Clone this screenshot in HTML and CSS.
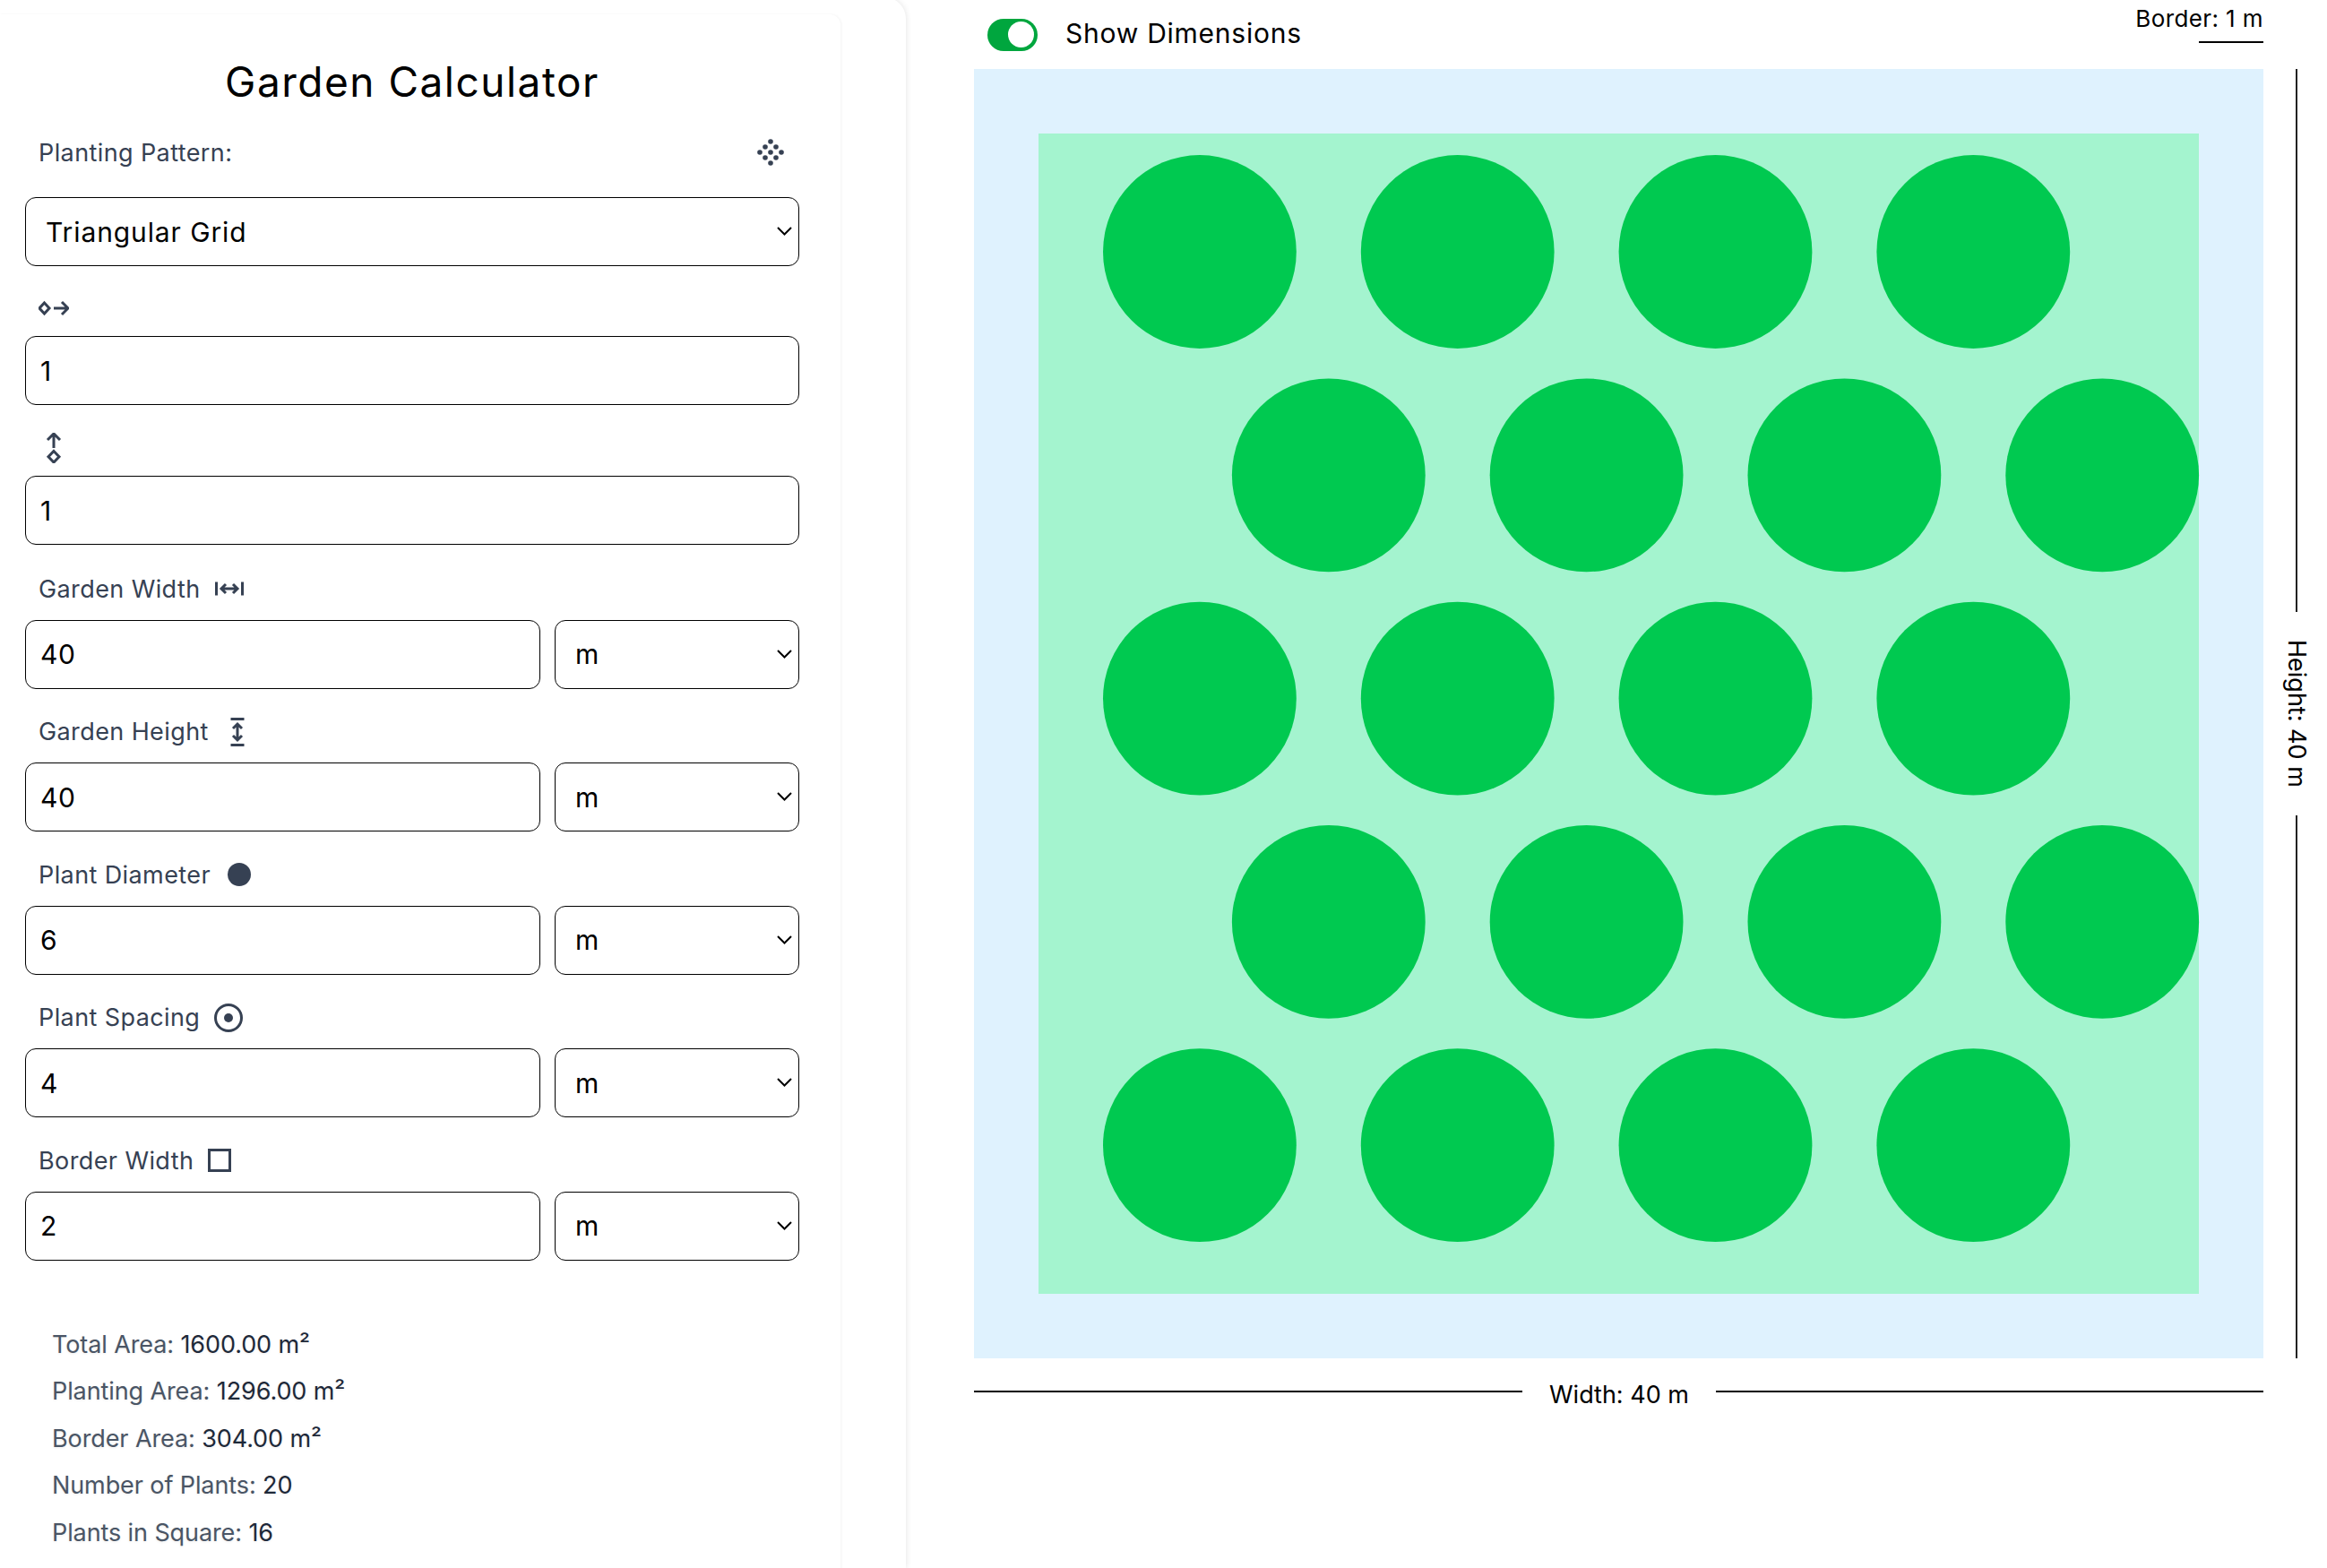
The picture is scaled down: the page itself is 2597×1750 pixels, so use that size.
FILE: index.html
```html
<!DOCTYPE html>
<html lang="en">
<head>
    <meta charset="UTF-8">
    <meta name="viewport" content="width=device-width, initial-scale=1.0">
    <title>Garden Calculator</title>
    <link rel="stylesheet" href="styles.css">
</head>
<body>
    <aside class="sidebar">
        <form class="card">
            <h1>Garden Calculator</h1>

            <div class="field field-pattern">
                <div class="label-row label-spread">
                    <label for="pattern">Planting Pattern:</label>
                    <svg class="icon" viewBox="0 0 30 30" width="30" height="30">
                        <g class="dots">
                            <circle cx="15" cy="3" r="2.8"/>
                            <circle cx="9" cy="9" r="2.8"/><circle cx="21" cy="9" r="2.8"/>
                            <circle cx="3" cy="15" r="2.8"/><circle cx="15" cy="15" r="2.8"/><circle cx="27" cy="15" r="2.8"/>
                            <circle cx="9" cy="21" r="2.8"/><circle cx="21" cy="21" r="2.8"/>
                            <circle cx="15" cy="27" r="2.8"/>
                        </g>
                    </svg>
                </div>
                <div class="select-wrap">
                    <select id="pattern" class="control select-wide">
                        <option>Triangular Grid</option>
                        <option>Square Grid</option>
                    </select>
                    <svg class="chevron" viewBox="0 0 17 10" width="17" height="10"><path d="M1 1l7.500 7.500L16 1"/></svg>
                </div>
            </div>

            <div class="field field-icon">
                <div class="label-row">
                    <svg class="icon" viewBox="0 0 34 34" width="34" height="34">
                        <g class="line">
                            <path d="M6.500 11L12 17l-5.500 6L1 17z"/>
                            <path d="M17 17h16M26 10l7 7-7 7"/>
                        </g>
                    </svg>
                </div>
                <input class="control" type="number" value="1">
            </div>

            <div class="field field-icon field-tall">
                <div class="label-row">
                    <svg class="icon" viewBox="0 0 34 34" width="34" height="34">
                        <g class="line">
                            <path d="M17 17V1M10 8l7-7 7 7"/>
                            <path d="M17 20.500l6 6.250-6 6.250-6-6.250z"/>
                        </g>
                    </svg>
                </div>
                <input class="control" type="number" value="1">
            </div>

            <div class="field">
                <div class="label-row">
                    <label for="gardenWidth">Garden Width</label>
                    <svg class="icon" viewBox="0 0 32 32" width="32" height="32">
                        <g class="line">
                            <path d="M1.500 8.500v15M30.500 8.500v15"/>
                            <path d="M7 16h18M12 11l-5 5 5 5M20 11l5 5-5 5"/>
                        </g>
                    </svg>
                </div>
                <div class="row">
                    <input id="gardenWidth" class="control" type="number" value="40">
                    <div class="select-wrap unit">
                        <select class="control"><option>m</option><option>ft</option></select>
                        <svg class="chevron" viewBox="0 0 17 10" width="17" height="10"><path d="M1 1l7.500 7.500L16 1"/></svg>
                    </div>
                </div>
            </div>

            <div class="field">
                <div class="label-row">
                    <label for="gardenHeight">Garden Height</label>
                    <svg class="icon" viewBox="0 0 32 32" width="32" height="32">
                        <g class="line">
                            <path d="M8.500 1.500h15M8.500 30.500h15"/>
                            <path d="M16 7v18M11 12l5-5 5 5M11 20l5 5 5-5"/>
                        </g>
                    </svg>
                </div>
                <div class="row">
                    <input id="gardenHeight" class="control" type="number" value="40">
                    <div class="select-wrap unit">
                        <select class="control"><option>m</option><option>ft</option></select>
                        <svg class="chevron" viewBox="0 0 17 10" width="17" height="10"><path d="M1 1l7.500 7.500L16 1"/></svg>
                    </div>
                </div>
            </div>

            <div class="field">
                <div class="label-row">
                    <label for="plantDiameter">Plant Diameter</label>
                    <svg class="icon" viewBox="0 0 32 32" width="32" height="32"><circle class="solid" cx="16" cy="16" r="13"/></svg>
                </div>
                <div class="row">
                    <input id="plantDiameter" class="control" type="number" value="6">
                    <div class="select-wrap unit">
                        <select class="control"><option>m</option><option>ft</option></select>
                        <svg class="chevron" viewBox="0 0 17 10" width="17" height="10"><path d="M1 1l7.500 7.500L16 1"/></svg>
                    </div>
                </div>
            </div>

            <div class="field">
                <div class="label-row">
                    <label for="plantSpacing">Plant Spacing</label>
                    <svg class="icon" viewBox="0 0 32 32" width="32" height="32">
                        <circle class="line" cx="16" cy="16" r="14.500"/>
                        <circle class="solid" cx="16" cy="16" r="5"/>
                    </svg>
                </div>
                <div class="row">
                    <input id="plantSpacing" class="control" type="number" value="4">
                    <div class="select-wrap unit">
                        <select class="control"><option>m</option><option>ft</option></select>
                        <svg class="chevron" viewBox="0 0 17 10" width="17" height="10"><path d="M1 1l7.500 7.500L16 1"/></svg>
                    </div>
                </div>
            </div>

            <div class="field">
                <div class="label-row label-tight">
                    <label for="borderWidth">Border Width</label>
                    <svg class="icon" viewBox="0 0 32 32" width="32" height="32"><rect class="line" x="4.500" y="4.500" width="23" height="23"/></svg>
                </div>
                <div class="row">
                    <input id="borderWidth" class="control" type="number" value="2">
                    <div class="select-wrap unit">
                        <select class="control"><option>m</option><option>ft</option></select>
                        <svg class="chevron" viewBox="0 0 17 10" width="17" height="10"><path d="M1 1l7.500 7.500L16 1"/></svg>
                    </div>
                </div>
            </div>

            <div class="results">
                <p>Total Area: <span>1600.00 m²</span></p>
                <p>Planting Area: <span>1296.00 m²</span></p>
                <p>Border Area: <span>304.00 m²</span></p>
                <p>Number of Plants: <span>20</span></p>
                <p>Plants in Square: <span>16</span></p>
            </div>
        </form>
    </aside>

    <main class="preview">
        <div class="toolbar">
            <div class="toggle-group">
                <span class="toggle"><span class="knob"></span></span>
                <span class="toggle-label">Show Dimensions</span>
            </div>
            <div class="dim-border">
                <span>Border: 1 m</span>
                <i class="rule"></i>
            </div>
        </div>

        <svg class="garden" viewBox="0 0 1439 1439" width="1439" height="1439">
            <rect width="1439" height="1439" fill="#dff2fe"/>
            <rect x="72" y="72" width="1295" height="1295" fill="#a4f4cf"/>
            <g fill="#00c950">
                <circle cx="251.900" cy="204" r="107.900"/><circle cx="539.700" cy="204" r="107.900"/><circle cx="827.500" cy="204" r="107.900"/><circle cx="1115.300" cy="204" r="107.900"/>
                <circle cx="395.800" cy="453.300" r="107.900"/><circle cx="683.600" cy="453.300" r="107.900"/><circle cx="971.400" cy="453.300" r="107.900"/><circle cx="1259.200" cy="453.300" r="107.900"/>
                <circle cx="251.900" cy="702.600" r="107.900"/><circle cx="539.700" cy="702.600" r="107.900"/><circle cx="827.500" cy="702.600" r="107.900"/><circle cx="1115.300" cy="702.600" r="107.900"/>
                <circle cx="395.800" cy="951.900" r="107.900"/><circle cx="683.600" cy="951.900" r="107.900"/><circle cx="971.400" cy="951.900" r="107.900"/><circle cx="1259.200" cy="951.900" r="107.900"/>
                <circle cx="251.900" cy="1201.200" r="107.900"/><circle cx="539.700" cy="1201.200" r="107.900"/><circle cx="827.500" cy="1201.200" r="107.900"/><circle cx="1115.300" cy="1201.200" r="107.900"/>
            </g>
        </svg>

        <div class="dim-height">
            <i class="rule"></i>
            <span>Height: 40 m</span>
            <i class="rule"></i>
        </div>

        <div class="dim-width">
            <i class="rule"></i>
            <span>Width: 40 m</span>
            <i class="rule"></i>
        </div>
    </main>
</body>
</html>
```

FILE: styles.css
```css
* {
    box-sizing: border-box;
}

html, body {
    height: 100%;
}

body {
    margin: 0;
    display: flex;
    overflow: hidden;
    background: #fff;
    color: #000;
    font-family: Inter, "Open Sans", sans-serif;
}

.sidebar {
    width: 1011px;
    flex: none;
    margin-top: -3px;
    padding-top: 19px;
    border-radius: 0 24px 0 0;
    box-shadow: 0 0 7px rgba(0, 0, 0, 0.12);
}

.card {
    width: 938px;
    height: 1800px;
    padding: 45px 46px 0 28px;
    border-radius: 0 12px 0 0;
    box-shadow: 1px 0 3px rgba(0, 0, 0, 0.05);
}

h1 {
    margin: 0 0 31px;
    height: 60px;
    line-height: 60px;
    text-align: center;
    font-size: 46px;
    font-weight: 400;
    letter-spacing: 1.500px;
}

.field {
    margin-bottom: 30px;
}

.field-pattern .label-row {
    margin-bottom: 32px;
}

.field-pattern {
    margin-bottom: 29px;
}

.field-icon {
    margin-bottom: 30px;
}

.field-icon .label-row {
    margin-bottom: 13px;
}

.field-tall {
    margin-bottom: 31px;
}

.label-row {
    display: flex;
    align-items: center;
    gap: 16px;
    height: 36px;
    margin-bottom: 16.500px;
    padding-left: 15px;
    font-size: 27px;
    letter-spacing: 0.400px;
    color: #364153;
}

.label-spread {
    justify-content: space-between;
    padding-right: 17px;
}

.label-tight {
    gap: 13px;
}

.icon {
    flex: none;
    display: block;
}

.dots, .solid {
    fill: #364153;
}

.line {
    fill: none;
    stroke: #364153;
    stroke-width: 3;
}

.row {
    display: flex;
    gap: 16px;
}

.control {
    display: block;
    width: 100%;
    height: 77px;
    padding: 0 16px;
    background: #fff;
    border: 1px solid #000;
    border-radius: 12px;
    color: #000;
    font-family: inherit;
    font-size: 30px;
    letter-spacing: 0.500px;
}

select.control {
    appearance: none;
    padding: 0 22px;
    letter-spacing: 0.900px;
}

.row input.control {
    flex: 1;
    min-width: 0;
}

.select-wrap {
    position: relative;
}

.unit {
    flex: none;
    width: 273px;
}

.chevron {
    position: absolute;
    right: 8px;
    top: 33px;
    fill: none;
    stroke: #000;
    stroke-width: 2;
    pointer-events: none;
}

.results {
    margin-top: 68px;
    padding-left: 30px;
}

.results p {
    margin: 0;
    height: 52.500px;
    line-height: 52.500px;
    font-size: 27px;
    letter-spacing: -0.100px;
    color: #4a5565;
    text-shadow: 0 1px 3px rgba(0, 0, 0, 0.08);
}

.results span {
    color: #1e2939;
}

/* right side */
.preview {
    display: grid;
    grid-template-columns: 1439px 71px;
    grid-template-rows: 77px 1439px 80px;
    padding-left: 76px;
}

.toolbar {
    grid-column: 1;
    grid-row: 1;
    display: flex;
    justify-content: space-between;
    align-items: center;
}

.toggle-group {
    display: flex;
    align-items: center;
    gap: 31px;
    padding-left: 15px;
}

.toggle {
    display: flex;
    align-items: center;
    justify-content: flex-end;
    width: 56px;
    height: 36px;
    padding-right: 4px;
    border-radius: 18px;
    background: #00a63e;
}

.knob {
    width: 29px;
    height: 29px;
    border-radius: 50%;
    background: #fff;
}

.toggle-label {
    padding-bottom: 3px;
    font-size: 30px;
    letter-spacing: 0.750px;
}

.dim-border {
    align-self: flex-start;
    display: flex;
    flex-direction: column;
    align-items: flex-end;
    font-size: 26px;
    letter-spacing: 0.400px;
}

.dim-border span {
    height: 46px;
    line-height: 42px;
}

.dim-border .rule {
    display: block;
    width: 72px;
    height: 2px;
    background: #000;
}

.garden {
    grid-column: 1;
    grid-row: 2;
    display: block;
}

.dim-height {
    grid-column: 2;
    grid-row: 2;
    display: flex;
    flex-direction: column;
    align-items: center;
    width: 50px;
    margin-left: 12px;
    font-size: 27px;
}

.dim-height .rule {
    flex: 1;
    width: 2px;
    background: #222;
}

.dim-height span {
    writing-mode: vertical-rl;
    padding: 31px 0;
}

.dim-width {
    grid-column: 1;
    grid-row: 3;
    display: flex;
    align-items: flex-start;
    padding-top: 36px;
    font-size: 27px;
}

.dim-width .rule {
    flex: 1;
    height: 2px;
    background: #000;
}

.dim-width .rule:first-child {
    flex: none;
    width: 612px;
}

.dim-width span {
    margin-top: -15px;
    padding: 0 30px;
    line-height: 40px;
}
```
